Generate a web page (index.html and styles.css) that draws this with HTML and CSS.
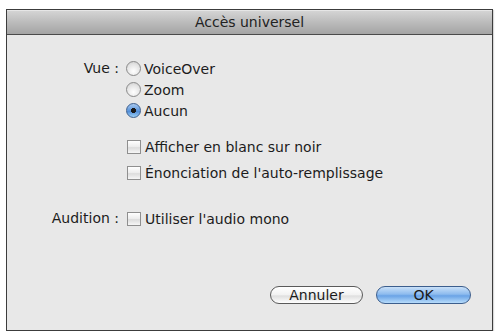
FILE: index.html
```html
<!DOCTYPE html>
<html lang="fr">
<head>
<meta charset="utf-8">
<title>Accès universel</title>
<link rel="stylesheet" href="styles.css">
</head>
<body>
<div class="window">
  <div class="titlebar">Accès universel</div>
  <div class="content">
    <div class="grid">
      <div class="label">Vue :</div>
      <div class="opt"><span class="radio"></span>VoiceOver</div>
      <div></div>
      <div class="opt"><span class="radio"></span>Zoom</div>
      <div></div>
      <div class="opt"><span class="radio on"></span>Aucun</div>
      <div></div>
      <div class="opt"><span class="check"></span>Afficher en blanc sur noir</div>
      <div></div>
      <div class="opt"><span class="check"></span>Énonciation de l'auto-remplissage</div>
      <div class="label">Audition :</div>
      <div class="opt"><span class="check"></span>Utiliser l'audio mono</div>
    </div>
    <div class="buttons">
      <span class="btn">Annuler</span>
      <span class="btn ok">OK</span>
    </div>
  </div>
</div>
</body>
</html>
```
FILE: styles.css
```css
html, body {
  margin: 0;
  padding: 0;
  background: #ffffff;
}
body {
  font-family: "DejaVu Sans", "Liberation Sans", sans-serif;
  font-size: 14px;
  color: #1c1c1c;
}
.window {
  margin: 9px 0 0 6px;
  width: 485px;
  height: 320px;
  border: 1px solid #3c3c3c;
  background: #e8e8e8;
  display: flex;
  flex-direction: column;
  box-shadow: 1px 1px 1px rgba(0,0,0,0.15);
}
.titlebar {
  height: 24px;
  line-height: 24px;
  text-align: center;
  background: linear-gradient(#d6d6d6, #bcbcbc 50%, #a4a4a4);
  border-bottom: 1px solid #4a4a4a;
  box-shadow: inset 0 1px 0 #e6e6e6;
  color: #222;
  font-size: 14px;
}
.content {
  flex: 1;
  display: flex;
  flex-direction: column;
  padding-top: 23px;
}
.grid {
  display: grid;
  grid-template-columns: 112px 1fr;
  grid-template-rows: 21px 21px 21px 36px 26px 46px;
  column-gap: 7px;
  align-items: end;
}
.label {
  text-align: right;
  height: 21px;
  line-height: 21px;
}
.opt {
  display: flex;
  align-items: center;
  gap: 3px;
  height: 21px;
}
.radio {
  width: 13px;
  height: 13px;
  border-radius: 50%;
  border: 1px solid #8a8a8a;
  background: radial-gradient(circle at 50% 70%, #ffffff, #e4e4e4 60%, #c8c8c8);
  box-sizing: content-box;
  flex: none;
}
.radio.on {
  border-color: #3d5f8e;
  background: radial-gradient(circle at 50% 50%, #1a1a1a 0, #1a1a1a 2.3px, transparent 2.8px),
              linear-gradient(#a9c9ef, #5d97dc 50%, #4e8ad6 55%, #9cd0f6);
}
.check {
  width: 12px;
  height: 12px;
  border: 1px solid #8f8f8f;
  background: linear-gradient(#ffffff, #ececec 50%, #dcdcdc 55%, #f6f6f6);
  flex: none;
  margin-left: 1px;
  margin-right: 1px;
}
.buttons {
  margin-top: auto;
  margin-bottom: 26px;
  display: flex;
  justify-content: flex-end;
  gap: 13px;
  padding-right: 21px;
}
.btn {
  height: 16px;
  line-height: 16px;
  border: 1px solid #5a5a5a;
  border-radius: 10px;
  text-align: center;
  width: 91px;
  background: linear-gradient(#ffffff, #f2f2f2 50%, #dedede 55%, #ffffff);
  font-size: 14px;
  color: #1a1a1a;
}
.btn.ok {
  width: 93px;
  border-color: #3c5e8d;
  background: linear-gradient(#c9e0f8, #8dbbee 45%, #6aa3e6 55%, #b7dcfb);
}
```
